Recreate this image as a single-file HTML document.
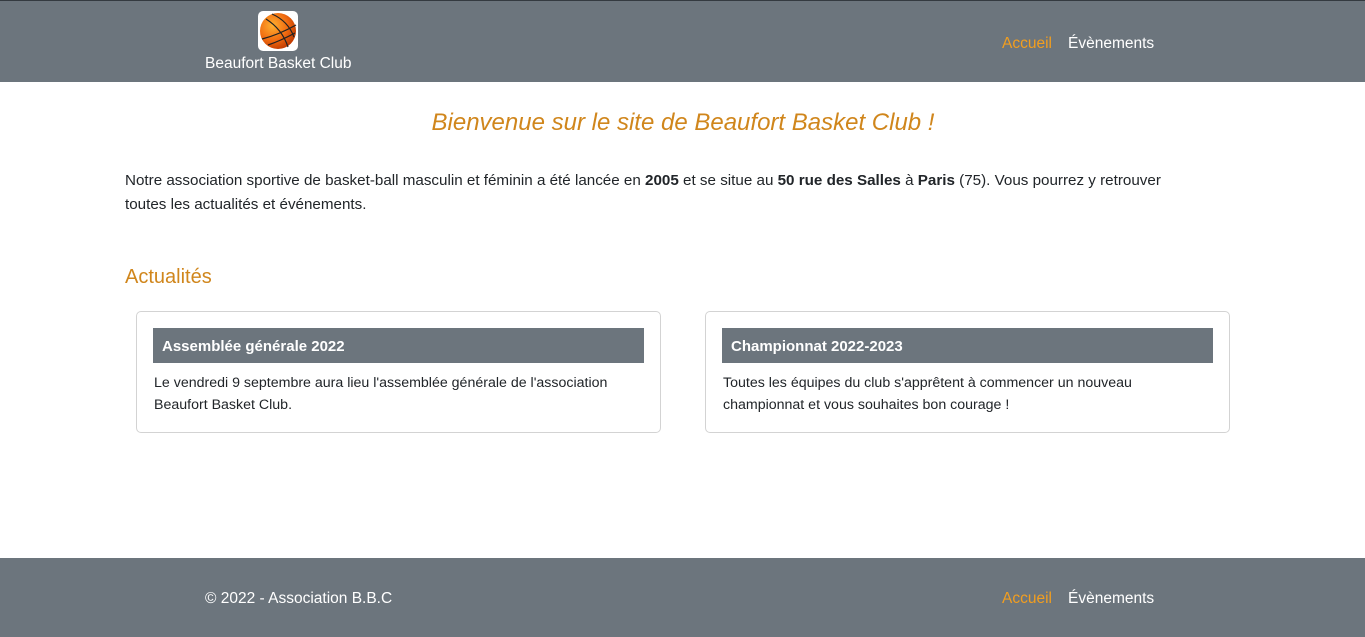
<!DOCTYPE html>
<html><head><meta charset="utf-8"><style>
*{margin:0;padding:0;box-sizing:border-box}
body{width:1365px;height:637px;font-family:"Liberation Sans",sans-serif;color:#212529;background:#fff;position:relative;overflow:hidden}
header{position:absolute;top:0;left:0;width:1365px;height:82px;background:#6c757d;border-top:1px solid #343a40}
.logo{position:absolute;left:258px;top:10px;width:40px;height:40px;background:#fff;border-radius:5px}
.brand{position:absolute;left:205px;top:54px;color:#fff;font-size:15.5px}
.nav{position:absolute;top:34px;font-size:15.5px;color:#fff}
.nav span{position:absolute;white-space:nowrap}
.o{color:#f29e1f}
h1{position:absolute;top:109px;left:0;width:1366px;text-align:center;font-size:24px;font-style:italic;font-weight:normal;color:#d0861c}
p.intro{position:absolute;left:125px;top:169px;width:1070px;font-size:15.2px;line-height:24px}
h2{position:absolute;left:125px;top:266px;font-size:20px;font-weight:normal;color:#d0861c}
.card{position:absolute;top:311px;width:525px;height:122px;border:1px solid #d3d3d3;border-radius:5px}
.card .t{position:absolute;left:16px;top:16px;width:491px;height:35px;background:#6c757d;color:#fff;font-weight:bold;font-size:15px;padding:10px 9px}
.card .b{position:absolute;left:17px;top:60px;width:475px;font-size:14.2px;line-height:22px}
footer{position:absolute;top:558px;left:0;width:1365px;height:79px;background:#6c757d;color:#fff}
</style></head><body>
<header>
<div class="logo"><svg width="40" height="40" viewBox="0 0 40 40"><defs><radialGradient id="g" cx="0.35" cy="0.35" r="0.7"><stop offset="0" stop-color="#ffb030"/><stop offset="0.6" stop-color="#f06a10"/><stop offset="1" stop-color="#c03a00"/></radialGradient></defs><circle cx="20" cy="20" r="18" fill="url(#g)"/><g fill="none" stroke="#222" stroke-width="1.2"><path d="M8 8 Q24 18 30 36"/><path d="M14 3 Q30 10 36 26"/><path d="M4 28 Q20 24 38 14"/><path d="M10 34 Q22 30 37 22"/></g></svg></div>
<div class="brand">Beaufort Basket Club</div>
<div class="nav"><span class="o" style="left:1002px">Accueil</span><span style="left:1068px">Évènements</span></div>
</header>
<h1>Bienvenue sur le site de Beaufort Basket Club !</h1>
<p class="intro">Notre association sportive de basket-ball masculin et féminin a été lancée en <b>2005</b> et se situe au <b>50 rue des Salles</b> à <b>Paris</b> (75). Vous pourrez y retrouver toutes les actualités et événements.</p>
<h2>Actualités</h2>
<div class="card" style="left:136px"><div class="t">Assemblée générale 2022</div><div class="b">Le vendredi 9 septembre aura lieu l'assemblée générale de l'association Beaufort Basket Club.</div></div>
<div class="card" style="left:705px"><div class="t">Championnat 2022-2023</div><div class="b">Toutes les équipes du club s'apprêtent à commencer un nouveau championnat et vous souhaites bon courage !</div></div>
<footer>
<div style="position:absolute;left:205px;top:32px;font-size:15.5px">© 2022 - Association B.B.C</div>
<div class="nav" style="top:32px"><span class="o" style="left:1002px">Accueil</span><span style="left:1068px">Évènements</span></div>
</footer>
</body></html>
